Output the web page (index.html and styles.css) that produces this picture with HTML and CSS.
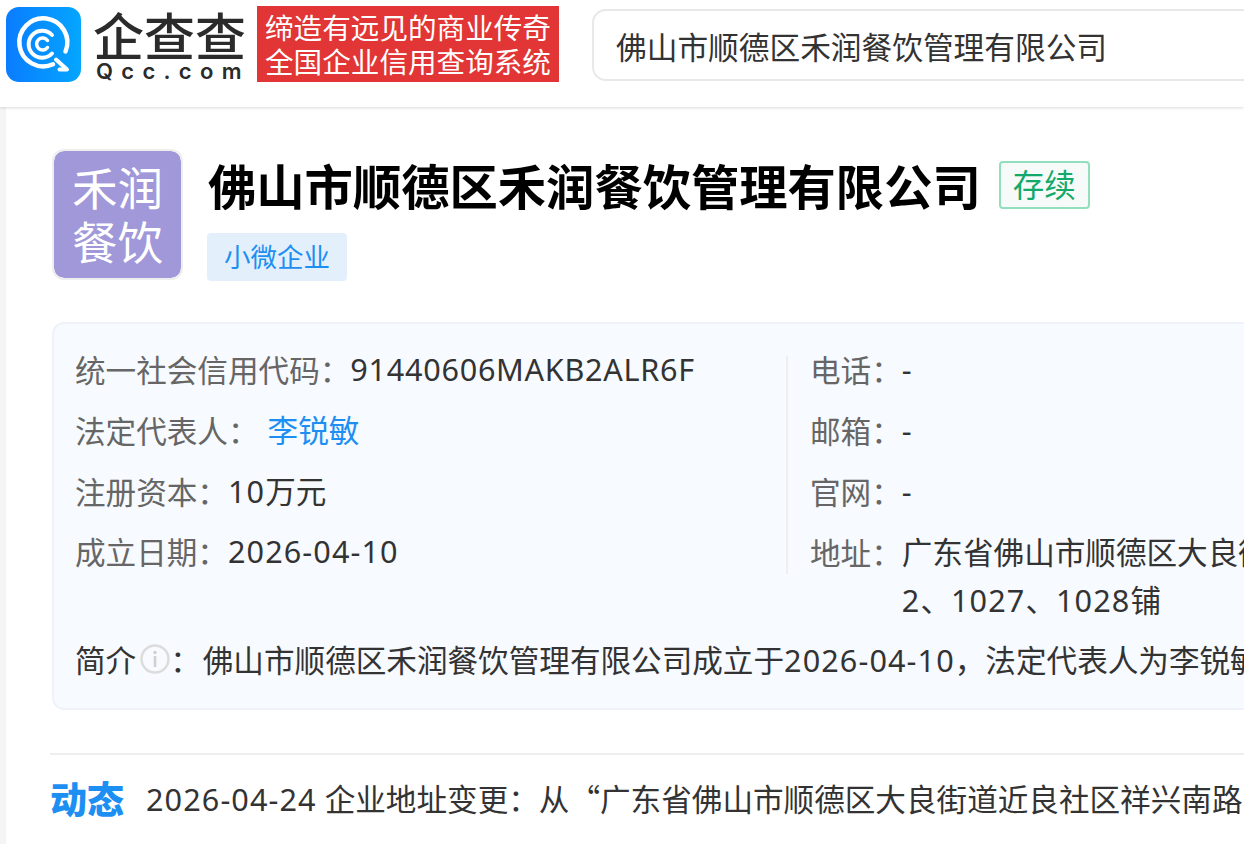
FILE: index.html
```html
<!DOCTYPE html>
<html lang="zh-CN">
<head>
<meta charset="utf-8">
<title>佛山市顺德区禾润餐饮管理有限公司</title>
<link rel="stylesheet" href="styles.css">
</head>
<body>
<header class="topbar">
  <svg class="logo-icon" viewBox="0 0 75 75" aria-hidden="true">
    <defs>
      <linearGradient id="logoGrad" x1="0" y1="0" x2="1" y2="0">
        <stop offset="0" stop-color="#0a7cff"/>
        <stop offset="1" stop-color="#04a6ff"/>
      </linearGradient>
    </defs>
    <rect width="75" height="75" rx="13" fill="url(#logoGrad)"/>
    <g fill="none" stroke="#fff" stroke-linecap="round" stroke-linejoin="round">
      <path d="M47 57.300A24 24 0 1 1 59.500 44.500" stroke-width="4.500"/>
      <path d="M46 46.500A13.500 13.500 0 1 1 46 28" stroke-width="4"/>
      <path d="M41.500 33.500A6 6 0 1 0 41.500 40.500" stroke-width="3.500"/>
      <path d="M50 52.500L61 62.500L53.500 62.500" stroke-width="4"/>
    </g>
  </svg>
  <div class="wordmark">
    <span class="wordmark-cn">企查查</span>
    <span class="wordmark-en">Qcc.com</span>
  </div>
  <div class="slogan">
    <span>缔造有远见的商业传奇</span>
    <span>全国企业信用查询系统</span>
  </div>
  <div class="search">佛山市顺德区禾润餐饮管理有限公司</div>
</header>

<main class="page">
  <section class="company-head">
    <div class="avatar"><span>禾润</span><span>餐饮</span></div>
    <div class="company-title">
      <div class="name-row">
        <h1 class="company-name">佛山市顺德区禾润餐饮管理有限公司</h1>
        <span class="status">存续</span>
      </div>
      <span class="size-tag">小微企业</span>
    </div>
  </section>

  <section class="panel">
    <div class="panel-cols">
      <div class="col-left">
        <div class="row"><span class="label">统一社会信用代码：</span><span class="code">91440606MAKB2ALR6F</span></div>
        <div class="row"><span class="label">法定代表人：</span><a class="link">李锐敏</a></div>
        <div class="row"><span class="label">注册资本：</span><span><span class="num">10</span>万元</span></div>
        <div class="row"><span class="label">成立日期：</span><span class="num">2026-04-10</span></div>
      </div>
      <div class="col-right">
        <div class="row"><span class="label">电话：</span><span>-</span></div>
        <div class="row"><span class="label">邮箱：</span><span>-</span></div>
        <div class="row"><span class="label">官网：</span><span>-</span></div>
        <div class="row address"><span class="label">地址：</span><span>广东省佛山市顺德区大良街道近良社区祥兴南路<br><span class="num">2</span>、<span class="num">1027</span>、<span class="num">1028</span>铺</span></div>
      </div>
    </div>
    <div class="intro">
      <span class="label">简介</span>
      <svg class="info-icon" viewBox="0 0 30 30" aria-hidden="true">
        <circle cx="15" cy="15" r="13.500" fill="none" stroke="#dcdcdc" stroke-width="2.500"/>
        <circle cx="15" cy="8.500" r="1.700" fill="#cfcfcf"/>
        <rect x="13.700" y="12" width="2.600" height="11" fill="#cfcfcf"/>
      </svg>
      <span class="label">：</span>
      <span class="intro-text">佛山市顺德区禾润餐饮管理有限公司成立于<span class="num">2026-04-10</span>，法定代表人为李锐敏，注册资本为<span class="num">10</span>万元</span>
    </div>
  </section>

  <section class="news">
    <strong class="news-title">动态</strong>
    <span><span class="num">2026-04-24</span> 企业地址变更：从<span class="cjk">“</span>广东省佛山市顺德区大良街道近良社区祥兴南路</span>
  </section>
</main>
</body>
</html>
```
FILE: styles.css
```css
html, body {
  margin: 0;
  height: 844px;
  overflow: hidden;
  background: #f5f5f5;
}

body {
  font-family: "Noto Sans", "Noto Sans CJK SC", sans-serif;
  color: #333;
  font-size: 30.600px;
}

.topbar {
  height: 107px;
  background: #fff;
  box-shadow: 0 1px 3px rgba(0, 0, 0, 0.14);
  display: flex;
  align-items: center;
  padding-left: 6px;
  position: relative;
  white-space: nowrap;
  overflow: hidden;
}

.logo-icon {
  width: 75px;
  height: 75px;
  flex: none;
  margin-top: -18px;
}

.wordmark {
  width: 153px;
  flex: none;
  margin-left: 12px;
  margin-top: -18px;
  display: flex;
  flex-direction: column;
  color: #2b2b2b;
  font-family: "Noto Sans CJK SC", sans-serif;
}

.wordmark-cn {
  font-size: 51px;
  line-height: 52px;
  font-weight: 500;
}

.wordmark-en {
  font-family: "Inter", sans-serif;
  font-size: 22px;
  line-height: 20px;
  font-weight: 600;
  letter-spacing: 8.300px;
  margin-left: 3px;
  margin-top: 1px;
}

.slogan {
  flex: none;
  width: 302px;
  height: 76px;
  margin-left: 11px;
  margin-top: -19px;
  background: #e23535;
  color: #fff;
  display: flex;
  flex-direction: column;
  justify-content: center;
  align-items: center;
  font-family: "Noto Sans CJK SC", sans-serif;
  font-size: 28.600px;
  line-height: 34px;
  box-sizing: border-box;
}

.search {
  flex: none;
  width: 800px;
  height: 72px;
  margin-left: 33px;
  margin-top: -17px;
  box-sizing: border-box;
  border: 2px solid #e8e8e8;
  border-radius: 14px;
  padding-left: 22px;
  font-size: 30.700px;
  line-height: 69px;
  font-family: "Noto Sans CJK SC", sans-serif;
}

.page {
  margin-left: 6px;
  background: #fff;
  height: 737px;
  padding: 42px 0 0 44px;
  box-sizing: border-box;
  white-space: nowrap;
  overflow: hidden;
}

.company-head {
  display: flex;
}

.avatar {
  width: 131px;
  height: 131px;
  box-sizing: border-box;
  border: 2px solid #eee;
  border-radius: 12px;
  background: #a098d9;
  background-clip: padding-box;
  color: #fff;
  display: flex;
  flex-direction: column;
  align-items: center;
  justify-content: center;
  font-size: 45.500px;
  line-height: 54px;
  flex: none;
  margin-left: 2px;
}

.company-title {
  margin-left: 24px;
  display: flex;
  flex-direction: column;
  align-items: flex-start;
}

.name-row {
  display: flex;
  align-items: flex-start;
  height: 76px;
}

.company-name {
  margin: 0 0 0 1px;
  font-size: 48.300px;
  line-height: 74px;
  font-weight: 700;
  color: #000;
}

.status {
  margin-left: 18px;
  margin-top: 12px;
  width: 91px;
  height: 48px;
  box-sizing: border-box;
  border: 2px solid #91dfbd;
  border-radius: 4px;
  background: #f6fbf9;
  color: #13a96b;
  font-size: 31.500px;
  line-height: 44px;
  text-align: center;
}

.size-tag {
  margin-top: 8px;
  height: 48px;
  padding: 0 17px;
  background: #e3f0fc;
  border-radius: 4px;
  color: #1e8ff2;
  font-size: 26.500px;
  line-height: 48px;
}

.panel {
  margin: 41px 0 0 2px;
  width: 1300px;
  height: 388px;
  box-sizing: border-box;
  border: 2px solid #eff3f9;
  border-radius: 12px;
  background: #f7fafe;
  padding: 16px 0 0 21px;
}

.panel-cols {
  display: flex;
}

.col-left {
  width: 711px;
  flex: none;
  height: 218px;
  margin-top: 16px;
}

.col-right {
  flex: none;
  border-left: 2px solid #eeeeee;
  padding-left: 22px;
  height: 218px;
  margin-top: 16px;
}

.row {
  display: flex;
  height: 60.800px;
  line-height: 26px;
}

.label {
  color: #666;
  font-family: "Noto Sans CJK SC", sans-serif;
}

.num {
  letter-spacing: 1.100px;
}

.code {
  letter-spacing: 0.720px;
}

.cjk {
  font-family: "Noto Sans CJK SC", sans-serif;
}

.link {
  color: #1e8ff2;
  margin-left: 9px;
}

.address {
  line-height: 48px;
  margin-top: -10px;
}

.intro {
  display: flex;
  align-items: center;
  margin-top: 65px;
  height: 40px;
  color: #333;
}

.intro .label {
  color: #333;
}

.intro-text {
  margin-left: 2px;
}

.info-icon {
  width: 30px;
  height: 30px;
  flex: none;
  margin-left: 4px;
}

.news {
  margin-top: 43px;
  border-top: 2px solid #eee;
  display: flex;
  align-items: center;
  height: 86px;
}

.news-title {
  color: #1e8ff2;
  font-size: 37px;
  font-weight: 900;
  margin-right: 22px;
  font-family: "Noto Sans CJK SC", sans-serif;
}
```
